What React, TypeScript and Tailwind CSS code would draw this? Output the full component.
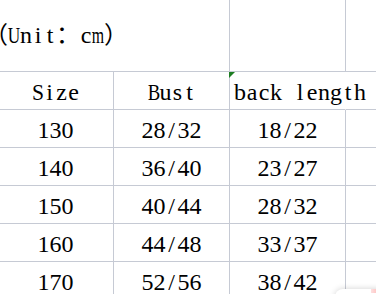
import React from 'react';
import clsx from 'clsx';

// SimSun-like spacing: every half-width char gets a 12px slot, full-width ones 24px
const squeeze: Record<string, string> = {
    U: 'scale-x-[0.72]',
    S: 'scale-x-[0.9]',
    B: 'scale-x-[0.78]',
    m: 'scale-x-[0.66]',
};

const Mono: React.FC<{ text: string }> = ({ text }) => (
    <>
        {Array.from(text).map((ch, i) => (
            <span
                key={i}
                className={clsx(
                    'inline-flex justify-center',
                    '（）：'.includes(ch) ? 'w-6' : 'w-3',
                    squeeze[ch]
                )}
            >
                {ch === ' ' ? '\u00a0' : ch}
            </span>
        ))}
    </>
);

const rows = [
    ['130', '28/32', '18/22'],
    ['140', '36/40', '23/27'],
    ['150', '40/44', '28/32'],
    ['160', '44/48', '33/37'],
    ['170', '52/56', '38/42'],
];

const line = 'border-[#c6cad4]';

const Cell: React.FC<{ children?: React.ReactNode; className?: string }> = ({ children, className }) => (
    <div className={clsx('h-[38px] border-r border-b pt-2 text-center leading-6 whitespace-nowrap', line, className)}>
        {children}
    </div>
);

const App: React.FC = () => {
    return (
        <div className="relative h-[294px] w-[376px] overflow-hidden bg-white font-['Liberation_Serif','Noto_Sans_CJK_SC',serif] text-[24px] text-black">
            <div className="-ml-[2px] grid w-[464px] grid-cols-[116px_116px_116px_116px]">
                {/* title row, first two columns merged */}
                <div className={clsx('col-span-2 h-[72px] border-r border-b pt-[23px] leading-6 whitespace-nowrap', line)}>
                    <div className="-ml-[14px]">
                        <Mono text="（Unit：cm）" />
                    </div>
                </div>
                <div className={clsx('h-[72px] border-r border-b', line)} />
                <div className={clsx('h-[72px] border-r border-b', line)} />

                {/* header */}
                <Cell>
                    <Mono text="Size" />
                </Cell>
                <Cell>
                    <Mono text="Bust" />
                </Cell>
                <Cell className="relative border-r-transparent pl-1 text-left">
                    <span className="absolute -left-px top-0 size-[6px] bg-[#1d7d22] [clip-path:polygon(0_0,100%_0,0_100%)]" />
                    <Mono text="back length" />
                </Cell>
                <Cell />

                {rows.map((r) => (
                    <React.Fragment key={r[0]}>
                        {r.map((v, i) => (
                            <Cell key={i}>
                                <Mono text={v} />
                            </Cell>
                        ))}
                        <Cell />
                    </React.Fragment>
                ))}
            </div>

            {/* floating widget peeking in at the corner */}
            <div className="absolute left-[335px] top-[289px] h-10 w-14 rounded-tl-lg bg-white shadow-[0_0_6px_rgba(0,0,0,0.18)]">
                <div className="absolute right-0 top-0 h-[4px] w-5 bg-linear-to-r from-[#fde0e0] to-[#f77f7f]" />
            </div>
        </div>
    );
};

export default App;
